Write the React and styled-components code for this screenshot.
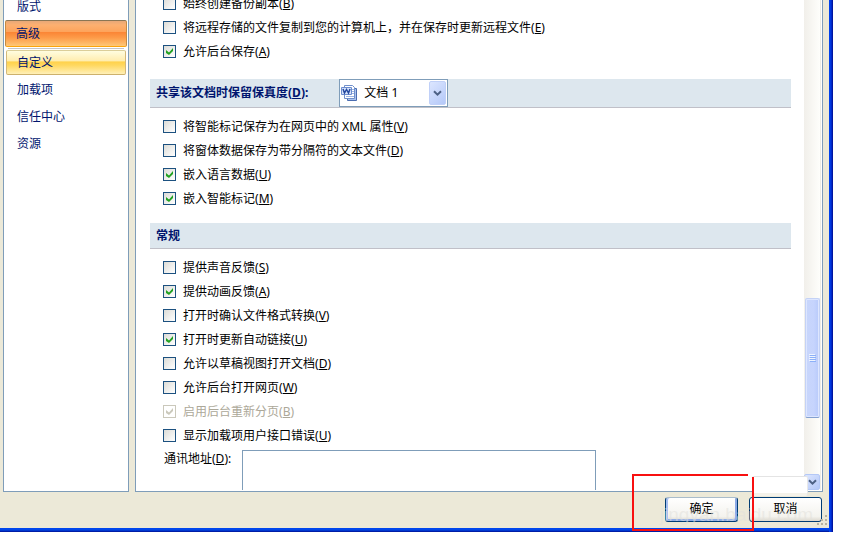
import React from "react";
import styled, { createGlobalStyle, css } from "styled-components";

const GlobalStyle = createGlobalStyle`
  * {
    box-sizing: border-box;
  }
  body {
    margin: 0;
    background: #fff;
    color: #000;
    font: 12px/16px "Noto Sans", "Noto Sans CJK SC", sans-serif;
  }
`;

const Page = styled.div`
  padding: 0 27px 11px 0;
  overflow: hidden;
`;

const Dialog = styled.form`
  position: relative;
  background: linear-gradient(to right, #0046f0, #0032dc 50%, #000a8c) right /
      4px 100% no-repeat,
    linear-gradient(#0046f0, #0046e6 50%, #000f91) bottom / 100% 4px no-repeat,
    #ece9d8;
  padding: 0 4px 4px 0;
`;

const Panels = styled.div`
  display: flex;
  align-items: stretch;
  gap: 6px;
  padding: 0 6px 0 3px;
`;

const Sidebar = styled.nav`
  flex: 0 0 126px;
  display: flex;
  flex-direction: column;
  margin-top: -7px;
  padding: 0 1px;
  background: #fff;
  border: 1px solid #7f9db9;
  border-top: 0;
`;

const NavItem = styled.button`
  height: 27px;
  flex: none;
  padding: 0 0 0 11px;
  border: 1px solid transparent;
  border-radius: 2px;
  background: none;
  color: #00156e;
  font: inherit;
  text-align: left;
  ${(props) =>
    props.$state === "selected" &&
    css`
      padding-left: 10px;
      border-color: #8b7654 #c68b42 #fca50c;
      background: linear-gradient(
        #e8a878,
        #fdb070 16%,
        #fda45c 42%,
        #fb8636 46%,
        #fd9a48 66%,
        #fec878
      );
    `}
  ${(props) =>
    props.$state === "hover" &&
    css`
      height: 25px;
      margin: 0 1px 1px;
      padding-left: 10px;
      border-color: #dbce99 #d4b978 #cdb16c;
      background: linear-gradient(
        #fffde0,
        #ffedb0 42%,
        #ffd24c 48%,
        #ffd860 62%,
        #fff0b8
      );
    `}
`;

const NavDivider = styled.hr`
  width: 116px;
  margin: 1px auto;
  border: 0;
  border-top: 1px solid #c5c5c5;
`;

const Main = styled.main`
  flex: 1;
  min-width: 0;
  display: flex;
  gap: 13px;
  padding: 0 1px 1px 14px;
  background: #fff;
  border: 1px solid #7f9db9;
  border-top: 0;
`;

const Content = styled.div`
  flex: 1;
  min-width: 0;
`;

const OptionList = styled.div`
  padding: 7px 0 12px 13px;
  ${(props) =>
    props.$first &&
    css`
      margin-top: -8px;
      padding-top: 0;
      padding-bottom: 15px;
    `}
  ${(props) =>
    props.$last &&
    css`
      padding-bottom: 0;
    `}
`;

const Option = styled.label`
  display: flex;
  align-items: center;
  gap: 7px;
  height: 24px;
  white-space: nowrap;
  color: ${(props) => (props.$disabled ? "#aca899" : "#000")};
`;

const Checkbox = styled.input`
  appearance: none;
  flex: none;
  width: 13px;
  height: 13px;
  margin: 0 0 1px;
  border: 1px solid #1c5180;
  background: linear-gradient(135deg, #dcdcd7, #fff);
  display: grid;
  place-items: center;
  &:checked::before {
    content: "";
    width: 7px;
    height: 7px;
    background: #21a121;
    clip-path: polygon(0 29%, 43% 64%, 100% 0, 100% 43%, 43% 100%, 0 71%);
  }
  &:disabled {
    border-color: #cac8bb;
    background: #fff;
  }
  &:disabled::before {
    background: #cac8bb;
  }
`;

const SectionTitle = styled.h2`
  display: flex;
  align-items: center;
  height: ${(props) => (props.$tall ? "29px" : "26px")};
  margin: 0;
  padding-left: 6px;
  border-bottom: 1px solid #c0c0c8;
  background: #dde7ee;
  color: #00156e;
  font-size: 12px;
  font-weight: 700;
`;

const Combo = styled.span`
  display: flex;
  align-items: center;
  width: 109px;
  height: 28px;
  margin-left: 31px;
  padding: 1px;
  border: 1px solid #7f9db9;
  background: #fff;
`;

const ComboSelect = styled.select`
  appearance: none;
  flex: 1;
  min-width: 0;
  padding: 0 0 0 7px;
  border: 0;
  background: none;
  color: #000;
  font: 12px/16px "Noto Sans", "Noto Sans CJK SC", sans-serif;
`;

const ComboArrow = styled.span`
  width: 17px;
  height: 24px;
  display: grid;
  place-items: center;
  border: 1px solid #c0d0f8;
  border-radius: 2px;
  background: linear-gradient(135deg, #dce6ff, #b4c8f8);
`;

const AddressRow = styled.div`
  display: flex;
  gap: 11px;
  padding: 2px 0 0 14px;
`;

const AddressLabel = styled.label`
  padding-top: 1px;
`;

const AddressInput = styled.textarea`
  display: block;
  flex: 0 1 354px;
  min-width: 0;
  height: 40px;
  border: 1px solid #7f9db9;
  border-bottom: 0;
  border-radius: 0;
  resize: none;
  background: #fff;
`;

const Scrollbar = styled.div`
  flex: 0 0 17px;
  display: flex;
  flex-direction: column;
  justify-content: flex-end;
  border-right: 1px solid #eeede5;
  background: linear-gradient(to right, #f1efea, #fefefb);
`;

const Thumb = styled.div`
  height: 120px;
  margin: 0 0 56px 1px;
  display: grid;
  place-items: center;
  border: 1px solid #c4d2f6;
  border-bottom-color: #84a0d0;
  border-radius: 2px;
  box-shadow: inset 0 0 0 1px #dde6ff;
  background: linear-gradient(to right, #c8d6fb, #c6d4fd 60%, #b8cafa);
`;

const ScrollButton = styled.button`
  height: 16px;
  padding: 0;
  display: grid;
  place-items: center;
  border: 1px solid #b4c8f6;
  border-radius: 2px;
  background: linear-gradient(135deg, #dce6ff, #b4c8f8);
`;

const Footer = styled.footer`
  display: flex;
  justify-content: flex-end;
  gap: 11px;
  padding: 5px 7px 6px;
`;

const DialogButton = styled.button`
  width: 73px;
  height: 25px;
  padding: 0 0 2px;
  border: 1px solid #003c74;
  border-radius: 3px;
  background: linear-gradient(#fff, #f4f3ee 80%, #dcd8ce);
  color: #000;
  font: inherit;
  ${(props) =>
    props.$primary &&
    css`
      border-top-color: #a9bccb;
      box-shadow: inset 2px 0 #a3bdf0, inset -2px -2px #8caae6;
    `}
`;

const Grip = styled.svg`
  position: absolute;
  right: 4px;
  bottom: 5px;
`;

const Highlight = styled.svg`
  position: absolute;
  right: 79px;
  bottom: 1px;
`;

const Patch = styled.div`
  position: absolute;
  right: 25px;
  bottom: 36px;
  width: 56px;
  height: 20px;
  border-top: 1px solid #e4e4e4;
  border-right: 1px solid #e8e8e8;
  border-radius: 2px;
  background: linear-gradient(#fff 16px, #f4f2ea 16px);
`;

const Watermark = styled.span`
  position: absolute;
  right: 20px;
  bottom: 6px;
  color: rgba(226, 225, 220, 0.55);
  font: 19px/22px "Liberation Sans", sans-serif;
  pointer-events: none;
`;

const navItems = [
  { title: "版式" },
  { title: "高级", state: "selected" },
  { title: "自定义", state: "hover" },
  { title: "加载项" },
  { title: "信任中心" },
  { title: "资源" },
];

const saveOptions = [
  { title: "始终创建备份副本", hotkey: "B" },
  {
    title: "将远程存储的文件复制到您的计算机上，并在保存时更新远程文件",
    hotkey: "E",
  },
  { title: "允许后台保存", hotkey: "A", checked: true },
];

const fidelityOptions = [
  { title: "将智能标记保存为在网页中的 XML 属性", hotkey: "V" },
  { title: "将窗体数据保存为带分隔符的文本文件", hotkey: "D" },
  { title: "嵌入语言数据", hotkey: "U", checked: true },
  { title: "嵌入智能标记", hotkey: "M", checked: true },
];

const generalOptions = [
  { title: "提供声音反馈", hotkey: "S" },
  { title: "提供动画反馈", hotkey: "A", checked: true },
  { title: "打开时确认文件格式转换", hotkey: "V" },
  { title: "打开时更新自动链接", hotkey: "U", checked: true },
  { title: "允许以草稿视图打开文档", hotkey: "D" },
  { title: "允许后台打开网页", hotkey: "W" },
  { title: "启用后台重新分页", hotkey: "B", checked: true, disabled: true },
  { title: "显示加载项用户接口错误", hotkey: "U" },
];

const Chevron = () => (
  <svg width="9" height="7" viewBox="0 0 9 7" aria-hidden="true">
    <path d="M1 1.2l3.5 3.5L8 1.2" fill="none" stroke="#4d6185" strokeWidth="2" />
  </svg>
);

const WordIcon = () => (
  <svg width="16" height="16" viewBox="0 0 16 16" aria-hidden="true">
    <path d="M6.500 3.500h9v12h-9z" fill="#a9c2ee" stroke="#4a6cb0" />
    <path d="M3.500.5h8l2 2v11h-10z" fill="#fff" stroke="#6f8fcb" />
    <path d="M11 4.500h2M11 6.500h2M11 8.500h2M5 11.500h8" stroke="#9db6e4" />
    <path d="M.5 2.500h10v7H.5z" fill="#d5e3fa" stroke="#6c8cce" />
    <path
      d="M2 4l1.500 4L5.500 4.500 7.500 8 9 4"
      fill="none"
      stroke="#2448a0"
      strokeWidth="1.5"
    />
  </svg>
);

const Options = ({ items, ...rest }) => (
  <OptionList {...rest}>
    {items.map((item) => (
      <Option key={item.title} $disabled={item.disabled}>
        <Checkbox
          type="checkbox"
          defaultChecked={item.checked}
          disabled={item.disabled}
        />
        <span>
          {item.title}(<u>{item.hotkey}</u>)
        </span>
      </Option>
    ))}
  </OptionList>
);

const App = () => {
  return (
    <Page>
      <GlobalStyle />
      <Dialog onSubmit={(e) => e.preventDefault()}>
        <Panels>
          <Sidebar>
            {navItems.map((item) => (
              <React.Fragment key={item.title}>
                {item.state === "hover" && <NavDivider />}
                <NavItem type="button" $state={item.state}>
                  {item.title}
                </NavItem>
              </React.Fragment>
            ))}
          </Sidebar>
          <Main>
            <Content>
              <Options items={saveOptions} $first />
              <SectionTitle $tall>
                <label htmlFor="fidelity">
                  共享该文档时保留保真度(<u>D</u>):
                </label>
                <Combo>
                  <WordIcon />
                  <ComboSelect id="fidelity">
                    <option>文档 1</option>
                  </ComboSelect>
                  <ComboArrow>
                    <Chevron />
                  </ComboArrow>
                </Combo>
              </SectionTitle>
              <Options items={fidelityOptions} />
              <SectionTitle>常规</SectionTitle>
              <Options items={generalOptions} $last />
              <AddressRow>
                <AddressLabel htmlFor="address">
                  通讯地址(<u>D</u>):
                </AddressLabel>
                <AddressInput id="address" />
              </AddressRow>
            </Content>
            <Scrollbar>
              <Thumb>
                <svg width="7" height="8" viewBox="0 0 7 8" aria-hidden="true">
                  <path d="M0 .5h6M0 2.500h6M0 4.500h6M0 6.500h6" stroke="#eef4fe" />
                  <path d="M1 1.500h6M1 3.500h6M1 5.500h6M1 7.500h6" stroke="#8cb0f8" />
                </svg>
              </Thumb>
              <ScrollButton type="button" aria-label="向下滚动">
                <Chevron />
              </ScrollButton>
            </Scrollbar>
          </Main>
        </Panels>
        <Footer>
          <DialogButton type="submit" $primary>
            确定
          </DialogButton>
          <DialogButton type="button">取消</DialogButton>
        </Footer>
        <Grip width="12" height="12" viewBox="0 0 12 12" aria-hidden="true">
          <path
            d="M8 0h2v2H8zM4 4h2v2H4zM8 4h2v2H8zM0 8h2v2H0zM4 8h2v2H4zM8 8h2v2H8z"
            fill="#b8b4a2"
          />
        </Grip>
        <Patch />
        <Watermark>jingyan.baidu.com</Watermark>
        <Highlight width="122" height="57" viewBox="0 0 122 57" aria-hidden="true">
          <path
            d="M116 1H1v55h120V3"
            fill="none"
            stroke="#f81010"
            strokeWidth="2"
          />
        </Highlight>
      </Dialog>
    </Page>
  );
};

export default App;
